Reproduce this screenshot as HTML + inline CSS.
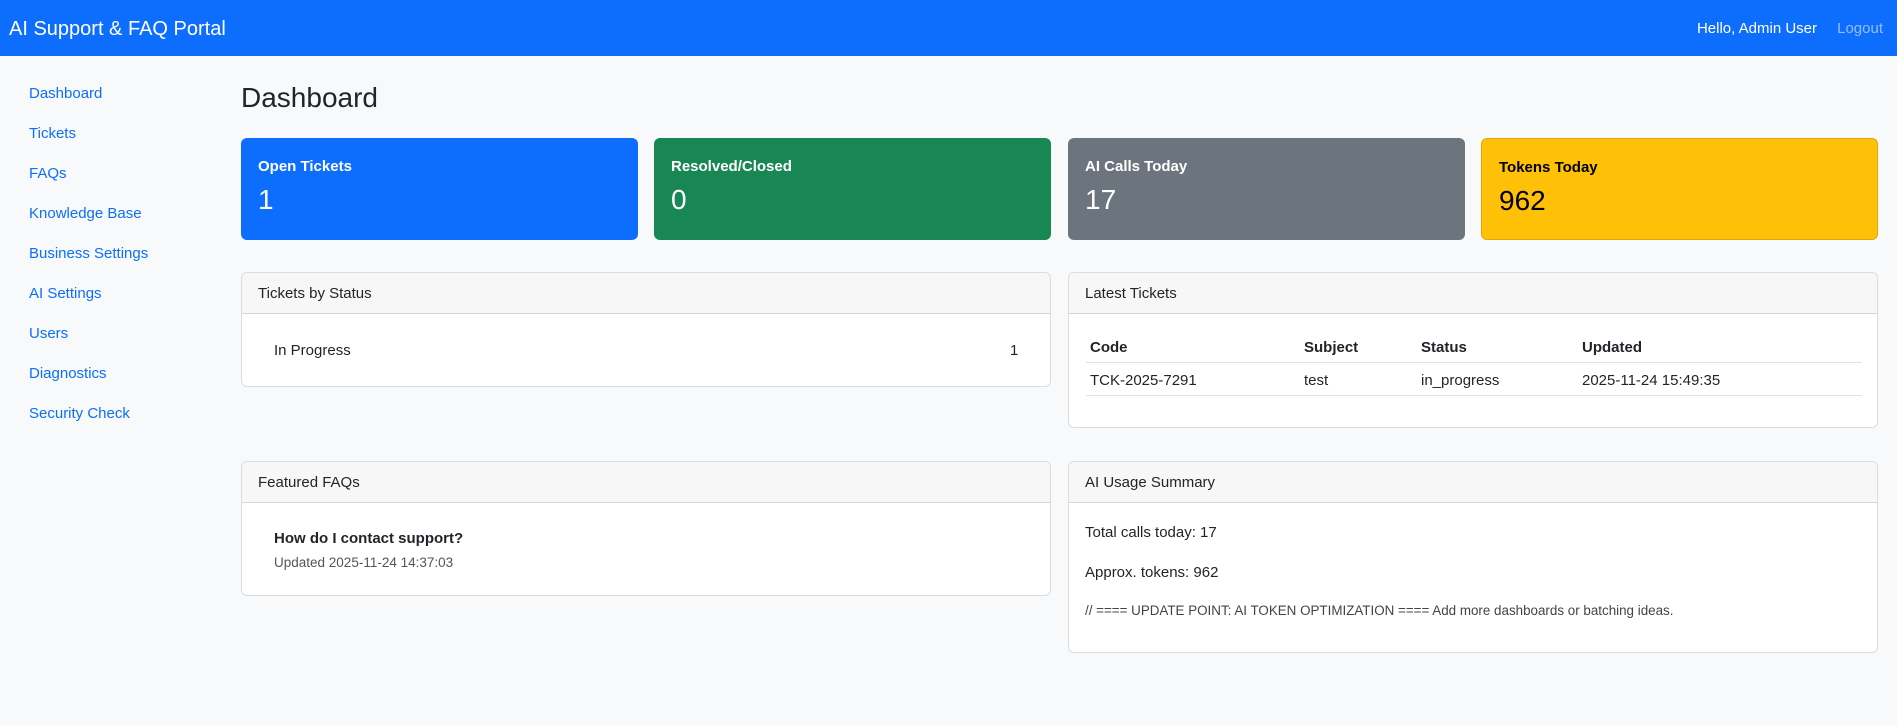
<!DOCTYPE html>
<html><head><meta charset="utf-8"><style>
*{box-sizing:border-box;margin:0;padding:0}
body{width:1897px;height:725px;background:#f8f9fa;font-family:"Liberation Sans",sans-serif;color:#212529;position:relative;overflow:hidden}
.nav{position:absolute;left:0;top:0;width:1897px;height:56px;background:#0d6efd}
.brand{position:absolute;left:9px;top:18px;font-size:20px;color:#fff}
.hello{position:absolute;right:80px;top:20px;font-size:15px;color:#fff}
.logout{position:absolute;right:14px;top:20px;font-size:15px;color:rgba(255,255,255,.55)}
.side a{position:absolute;left:29px;font-size:15px;color:#0d6efd;text-decoration:none}
h3{position:absolute;left:241px;top:82px;font-size:28px;font-weight:500}
.stat{position:absolute;top:138px;height:102px;width:397px;border-radius:6px;color:#fff;padding:20px 17px}
.stat .t{font-size:15px;font-weight:bold;height:22px}
.stat .n{font-size:28px;margin-top:4px}
.card{position:absolute;background:#fff;border:1px solid #dcdcdc;border-radius:6px;overflow:hidden}
.card .h{height:41px;background:#f7f7f7;border-bottom:1px solid #d5d5d5;padding:12px 16px;font-size:15px}
.abs{position:absolute;font-size:15px}
.line{position:absolute;height:1px;background:#dee2e6}
</style></head><body>
<div class="nav"><div class="brand">AI Support &amp; FAQ Portal</div><div class="hello">Hello, Admin User</div><div class="logout">Logout</div></div>
<div class="side">
<a style="top:85px">Dashboard</a><a style="top:125px">Tickets</a><a style="top:165px">FAQs</a><a style="top:205px">Knowledge Base</a><a style="top:245px">Business Settings</a><a style="top:285px">AI Settings</a><a style="top:325px">Users</a><a style="top:365px">Diagnostics</a><a style="top:405px">Security Check</a>
</div>
<h3>Dashboard</h3>
<div class="stat" style="left:241px;background:#0d6efd"><div class="t">Open Tickets</div><div class="n">1</div></div>
<div class="stat" style="left:654px;background:#198754"><div class="t">Resolved/Closed</div><div class="n">0</div></div>
<div class="stat" style="left:1068px;background:#6c757d"><div class="t">AI Calls Today</div><div class="n">17</div></div>
<div class="stat" style="left:1481px;background:#ffc107;color:#000;border:1px solid #e0a800"><div class="t">Tokens Today</div><div class="n">962</div></div>

<div class="card" style="left:241px;top:272px;width:810px;height:115px"><div class="h">Tickets by Status</div>
<div class="abs" style="left:32px;top:69px">In Progress</div><div class="abs" style="left:768px;top:69px">1</div></div>

<div class="card" style="left:1068px;top:272px;width:810px;height:156px"><div class="h">Latest Tickets</div>
<div class="abs" style="left:21px;top:66px;font-weight:bold">Code</div>
<div class="abs" style="left:235px;top:66px;font-weight:bold">Subject</div>
<div class="abs" style="left:352px;top:66px;font-weight:bold">Status</div>
<div class="abs" style="left:513px;top:66px;font-weight:bold">Updated</div>
<div class="line" style="left:17px;top:89px;width:776px"></div>
<div class="abs" style="left:21px;top:99px">TCK-2025-7291</div>
<div class="abs" style="left:235px;top:99px">test</div>
<div class="abs" style="left:352px;top:99px">in_progress</div>
<div class="abs" style="left:513px;top:99px">2025-11-24 15:49:35</div>
<div class="line" style="left:17px;top:122px;width:776px"></div>
</div>

<div class="card" style="left:241px;top:461px;width:810px;height:135px"><div class="h">Featured FAQs</div>
<div class="abs" style="left:32px;top:68px;font-weight:bold">How do I contact support?</div>
<div class="abs" style="left:32px;top:93px;font-size:13.5px;color:#555">Updated 2025-11-24 14:37:03</div></div>

<div class="card" style="left:1068px;top:461px;width:810px;height:192px"><div class="h">AI Usage Summary</div>
<div class="abs" style="left:16px;top:62px">Total calls today: 17</div>
<div class="abs" style="left:16px;top:102px">Approx. tokens: 962</div>
<div class="abs" style="left:16px;top:141px;font-size:13.4px;color:#444">// ==== UPDATE POINT: AI TOKEN OPTIMIZATION ==== Add more dashboards or batching ideas.</div></div>
</body></html>
